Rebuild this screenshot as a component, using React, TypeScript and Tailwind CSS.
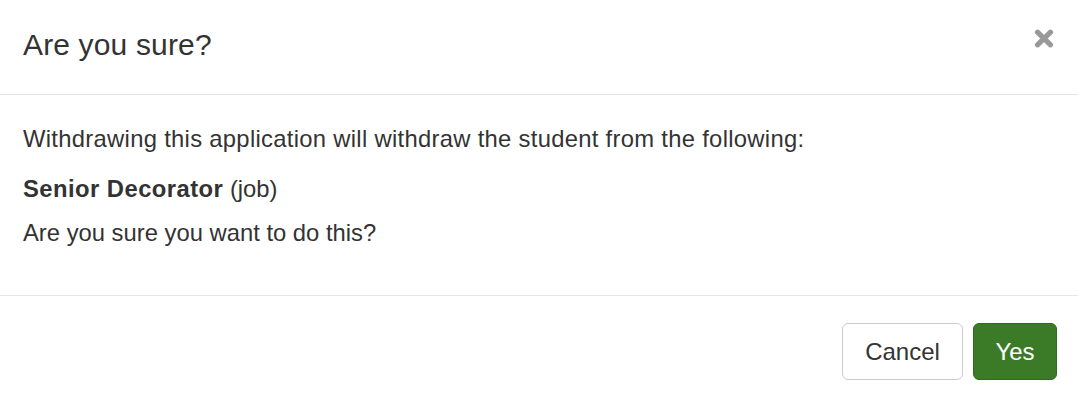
export default function App() {
  return (
    <div className="w-[1078px] h-[404px] bg-white text-[#333333] font-['Liberation_Sans',Arial,sans-serif]">
      <div className="h-[95px] border-b border-[#e5e5e5] flex items-start justify-between pl-[23px] pr-[24px] pt-[28px]">
        <h4 className="text-[30px] leading-[33px] font-normal tracking-[0.15px]">Are you sure?</h4>
        <button type="button" className="mt-[1px] w-[20px] h-[19px] flex items-center justify-center text-[#999999]" aria-label="Close">
          <svg viewBox="0 0 20 19" width="20" height="19" fill="none" stroke="currentColor" strokeWidth="5.2" strokeLinecap="round">
            <line x1="3.5" y1="3.2" x2="16.5" y2="15.8" />
            <line x1="16.5" y1="3.2" x2="3.5" y2="15.8" />
          </svg>
        </button>
      </div>
      <div className="h-[200px] px-[23px] pt-[27px] text-[23.8px] leading-[34px]">
        <p className="tracking-[0.3px]">Withdrawing this application will withdraw the student from the following:</p>
        <p className="mt-[16px]">
          <strong className="font-bold tracking-[0.45px]">Senior Decorator</strong> (job)
        </p>
        <p className="mt-[10px]">Are you sure you want to do this?</p>
      </div>
      <div className="border-t border-[#e5e5e5] flex justify-end gap-[10px] pt-[27px] pr-[21px]">
        <button type="button" className="h-[57px] w-[121px] flex items-center justify-center rounded-[6px] border border-[#cccccc] bg-white text-[24px] text-[#333333]">
          Cancel
        </button>
        <button type="button" className="h-[57px] w-[84px] flex items-center justify-center rounded-[6px] border border-[#2f6a20] bg-[#3b7b27] text-[24px] text-white">
          Yes
        </button>
      </div>
    </div>
  )
}
